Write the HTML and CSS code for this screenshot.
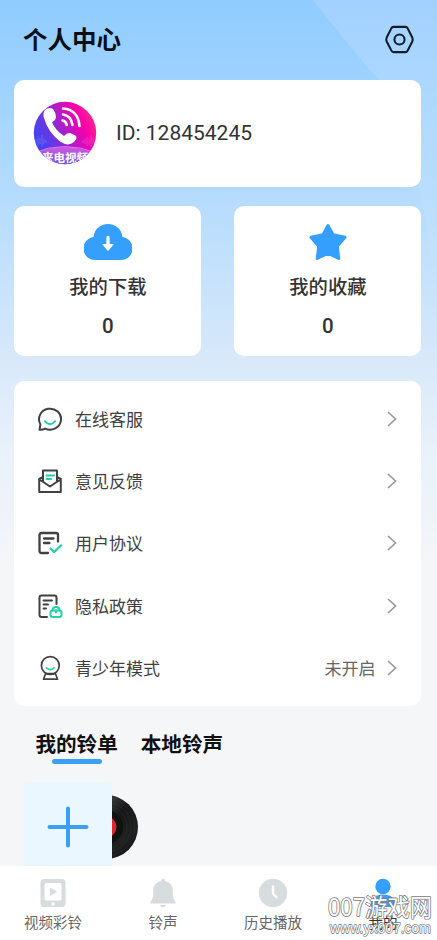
FILE: index.html
```html
<!DOCTYPE html>
<html lang="zh-CN">
<head>
<meta charset="utf-8">
<meta name="viewport" content="width=device-width, initial-scale=1">
<title>个人中心</title>
<link rel="stylesheet" href="styles.css">
</head>
<body>
<div class="app">
  <svg class="beam" viewBox="0 0 437 320" aria-hidden="true">
    <defs><linearGradient id="beam" x1="0" y1="0" x2="0" y2="1"><stop offset="0" stop-color="#b5d5ff" stop-opacity=".5"/><stop offset=".35" stop-color="#bfe0ff" stop-opacity=".4"/><stop offset="1" stop-color="#d5eaff" stop-opacity="0"/></linearGradient></defs>
    <path d="M313 0H437V320Q425 150 378 79Q340 35 313 0Z" fill="url(#beam)"/>
  </svg>
  <header class="header">
    <h1 class="title">个人中心</h1>
    <svg class="settings" viewBox="0 0 30 30" fill="none" stroke="#101c28" stroke-width="2">
      <path d="M9.200 2.800H20.800Q22.100 2.800 22.800 4L27.400 13.100Q28.100 15 27.400 16.900L22.800 25.800Q22.100 27.200 20.800 27.200H9.200Q7.900 27.200 7.200 25.800L2.600 16.900Q1.900 15 2.600 13.100L7.200 4Q7.900 2.800 9.200 2.800Z"/>
      <circle cx="15" cy="15" r="4.900"/>
    </svg>
  </header>

  <main class="content">
    <section class="card profile">
      <svg class="avatar" viewBox="0 0 64 64">
        <defs>
          <linearGradient id="av" x1="0" y1=".62" x2=".9" y2=".2"><stop offset="0" stop-color="#3c42f7"/><stop offset=".25" stop-color="#603be6"/><stop offset=".55" stop-color="#b51ac8"/><stop offset=".8" stop-color="#f500ae"/><stop offset="1" stop-color="#ff218f"/></linearGradient>
          <linearGradient id="hill" x1="0" y1="0" x2="0" y2="1"><stop offset="0" stop-color="#d755df"/><stop offset="1" stop-color="#6557ed"/></linearGradient>
          <clipPath id="round"><circle cx="32" cy="32" r="31.200"/></clipPath>
        </defs>
        <g clip-path="url(#round)">
          <path fill="url(#av)" d="M0 0H64V64H0Z"/>
          <path d="M0 53Q31 39 64 53V64H0Z" fill="url(#hill)"/>
          <path d="M0 52Q31 39 64 52" fill="none" stroke="#ef8cf0" stroke-width=".8"/>
          <path d="M3 38V42M5 35V45M7 37V43M9 34V46M11 38V43M13 39V42M50 39V42M52 38V43M54 36V45M56 38V44M58 34V46M60 37V43" stroke="#fff" stroke-opacity=".2"/>
          <path d="M12 9Q16 5.500 20 8Q22.500 11 23 16Q22.500 20 19 21Q22 29 31 35Q34 31.500 37 32L42.500 34.500Q45 37 41 41Q35 46 27 40.500Q15 31 11 17Q9.500 12 12 9Z" fill="#fff"/>
          <g fill="none" stroke="#fff" stroke-width="2.600" stroke-linecap="round"><path d="M30 13.500Q38 14.500 39.500 24M30 7.500Q45 8.500 46.500 25"/><path d="M29.500 19.500Q33 20 33.700 24"/></g>
          <text x="32" y="60.500" text-anchor="middle" class="avatar-text">来电视频</text>
        </g>
      </svg>
      <span class="user-id">ID: 128454245</span>
    </section>

    <section class="stats">
      <div class="card stat">
        <svg class="stat-icon" viewBox="0 0 48 38"><path d="M12.500 37A11.500 11.500 0 0 1 9.500 14C10.500 6 16.500 1 24 1S37.500 6 38.500 14A11.500 11.500 0 0 1 35.500 37Z" fill="#349ffc"/><path d="M22.400 13.500Q24 12 25.600 13.500V21H30L24.600 27.500Q24 28.100 23.400 27.500L18 21H22.400Z" fill="#fff"/></svg>
        <span class="stat-label">我的下载</span><span class="stat-value">0</span>
      </div>
      <div class="card stat">
        <svg class="stat-icon" viewBox="0 0 48 38"><path d="M24 2.500L29 11.800L41 14.300L33.300 23.300L34.800 35.500L24 30.500L13.200 35.500L14.700 23.300L7 14.300L19 11.800Z" fill="#349ffc" stroke="#349ffc" stroke-width="3" stroke-linejoin="round"/></svg>
        <span class="stat-label">我的收藏</span><span class="stat-value">0</span>
      </div>
    </section>

    <nav class="card menu">
      <a class="row"><svg class="row-icon" viewBox="0 0 26 26"><path d="M2.500 23.800L3.400 18.200A11 10.500 0 1 1 8.200 22.600Q6 24 2.500 23.800Z"/><path class="mint" d="M8 15.300Q13 21 18 15.300"/></svg><span class="row-label">在线客服</span><svg class="chevron" viewBox="0 0 12 18"><path d="M2 2L9.500 9L2 16"/></svg></a>
      <a class="row"><svg class="row-icon" viewBox="0 0 26 26"><path d="M6 9L2.200 11V24H23.800V11L20 9M2.500 11.500L13 18.500L23.500 11.500M6 13.500V2.500H20V13.500"/><path class="mint" d="M9.500 7.500H17M9.500 11H14"/></svg><span class="row-label">意见反馈</span><svg class="chevron" viewBox="0 0 12 18"><path d="M2 2L9.500 9L2 16"/></svg></a>
      <a class="row"><svg class="row-icon" viewBox="0 0 26 26"><path class="bold" d="M11 23H4.500Q2.500 23 2.500 21V5Q2.500 3 4.500 3H19Q21 3 21 5V11.500M7 8.500H16.500M7 13H12.500"/><path class="mint bold" d="M13.500 18.500L17.200 22L24 15.500"/></svg><span class="row-label">用户协议</span><svg class="chevron" viewBox="0 0 12 18"><path d="M2 2L9.500 9L2 16"/></svg></a>
      <a class="row"><svg class="row-icon" viewBox="0 0 26 26"><path d="M10 24H4.500Q2.500 24 2.500 22V4.500Q2.500 2.500 4.500 2.500H17.500Q19.500 2.500 19.500 4.500V11M6.500 7.500H15M6.500 11.500H11M6.500 15.500H9"/><g class="mint"><rect x="13.500" y="17.500" width="11" height="6.500" rx="2"/><path d="M15.500 17.500Q15.500 14 19 14T22.500 17.500M19 17.500V19.500"/></g></svg><span class="row-label">隐私政策</span><svg class="chevron" viewBox="0 0 12 18"><path d="M2 2L9.500 9L2 16"/></svg></a>
      <a class="row"><svg class="row-icon thin" viewBox="0 0 26 26"><circle cx="13.300" cy="10.500" r="8.900"/><path d="M8.500 18.700L6.500 24.200H20.500L18.500 18.700Z"/><path class="mint" d="M9.500 12.800Q13.300 16.500 17 12.800"/></svg><span class="row-label">青少年模式</span><span class="row-status">未开启</span><svg class="chevron" viewBox="0 0 12 18"><path d="M2 2L9.500 9L2 16"/></svg></a>
    </nav>

    <div class="tabs"><a class="tab active">我的铃单</a><a class="tab">本地铃声</a></div>

    <div class="playlist">
      <div class="add-tile"><svg class="plus" viewBox="0 0 42 42"><path d="M21 2.500V39.500M2.500 21H39.500" stroke="#3b9ff5" stroke-width="4" stroke-linecap="round"/></svg></div>
      <svg class="disc" viewBox="0 0 27 66">
        <defs><linearGradient id="vinyl" x1="0" y1="0" x2="1" y2="1"><stop offset="0" stop-color="#111"/><stop offset=".3" stop-color="#363a3a"/><stop offset=".5" stop-color="#161818"/><stop offset=".75" stop-color="#202222"/><stop offset="1" stop-color="#080808"/></linearGradient></defs>
        <circle cx="-6" cy="33" r="32" fill="url(#vinyl)"/>
        <g fill="none" stroke="#515454" stroke-width=".4" opacity=".4"><circle cx="-6" cy="33" r="29"/><circle cx="-6" cy="33" r="25"/><circle cx="-6" cy="33" r="21"/></g>
        <circle cx="-6" cy="33" r="17" fill="#101111"/><circle cx="-6" cy="33" r="10.500" fill="#d9272d"/>
      </svg>
    </div>
  </main>

  <footer class="tabbar">
    <a class="nav-item"><svg class="nav-icon" viewBox="0 0 30 30"><path fill-rule="evenodd" d="M6 1H24Q27.500 1 27.500 4.500V25.500Q27.500 29 24 29H6Q2.500 29 2.500 25.500V4.500Q2.500 1 6 1ZM8 5Q6.500 5 6.500 6.500V21Q6.500 22.500 8 22.500H22Q23.500 22.500 23.500 21V6.500Q23.500 5 22 5Z"/><path d="M12 9.500L19 13.700L12 18Z"/><circle cx="15" cy="26" r="1.700" fill="#fff"/></svg><span>视频彩铃</span></a>
    <a class="nav-item"><svg class="nav-icon" viewBox="0 0 30 30"><path d="M13 3Q13 .8 15 .8T17 3Q24.500 5 24.800 12V19L27.500 24Q28 25.500 27 25.500H3Q2 25.500 2.500 24L5.200 19V12Q5.500 5 13 3ZM12 27H18Q17.500 29.300 15 29.300T12 27Z"/></svg><span>铃声</span></a>
    <a class="nav-item"><svg class="nav-icon" viewBox="0 0 30 30"><circle cx="15" cy="15" r="14.200"/><path d="M15 8.500V15Q15 16.500 18.500 19" fill="none" stroke="#fff" stroke-width="2.400" stroke-linecap="round"/></svg><span>历史播放</span></a>
    <a class="nav-item current"><svg class="nav-icon" viewBox="0 0 30 30"><circle cx="15" cy="8.500" r="7.700"/><path d="M2.500 27.500Q3 16.500 15 16.500T27.500 27.500Q27.500 29 25.500 29H4.500Q2.500 29 2.500 27.500Z"/></svg><span>我的</span></a>
  </footer>

  <svg class="site-mark" viewBox="0 0 112 50">
    <text x="3" y="25" class="mark-name" textLength="104" lengthAdjust="spacingAndGlyphs">007游戏网</text>
    <text x="5" y="42" class="mark-url" textLength="101" lengthAdjust="spacingAndGlyphs">www.yx007.com</text>
  </svg>
</div>
</body>
</html>
```
FILE: styles.css
```css
* { box-sizing: border-box; }
body { margin: 0; font-family: Roboto, "Noto Sans CJK SC", sans-serif; color: #333; }
.app {
  position: relative; display: flex; flex-direction: column;
  width: 437px; height: 940px; overflow: hidden;
  background: linear-gradient(#90ccff 0, #9ed2ff 80px, #b6dcfd 200px, #d9e9fa 365px, #e9f1fa 450px, #f5f6f8 570px);
}
.beam { position: absolute; top: 0; left: 0; width: 437px; height: 320px; }
.header {
  position: relative; display: flex; align-items: center; justify-content: space-between;
  height: 80px; padding: 0 22px 2px 23px;
}
.title { margin: 4px 0 0; font-size: 24.500px; line-height: 36px; font-weight: 700; color: #080f18; }
.settings { width: 31px; height: 31px; }
.content { position: relative; flex: 1; min-height: 0; padding: 0 15.600px 0 14.400px; overflow: hidden; }
.card { background: #fff; border-radius: 10px; }
.profile { display: flex; align-items: center; gap: 18.600px; height: 106.500px; padding-left: 19px; }
.avatar { width: 64px; height: 64px; }
.avatar-text { font: 700 11.500px "Noto Sans CJK SC", sans-serif; fill: #fff; }
.user-id { font-size: 21px; line-height: 30px; }
.stats { display: grid; grid-template-columns: 1fr 1fr; gap: 33px; margin-top: 19.500px; }
.stat { display: flex; flex-direction: column; align-items: center; height: 150px; padding-top: 16.500px; }
.stat-icon { width: 48px; height: 38px; }
.stat-label { margin-top: 13px; font-size: 19.300px; line-height: 28px; font-weight: 500; }
.stat-value { margin-top: 9.500px; font-size: 20.500px; line-height: 30px; font-weight: 500; }
.menu { height: 325.500px; margin-top: 24.500px; padding: 7.500px 23px 0; }
.row { display: flex; align-items: center; height: 62.200px; }
.row-icon { width: 26px; height: 26px; margin-right: 11.500px; fill: none; stroke: #414141; stroke-width: 2; stroke-linejoin: round; stroke-linecap: round; }
.row-icon.thin { stroke-width: 1.700; }
.row-icon .bold { stroke-width: 2.300; }
.row-icon .mint { stroke: #23cfa5; }
.row-label { margin-top: 2px; font-size: 17px; line-height: 26px; color: #404040; }
.row-status { margin-left: auto; font-size: 17px; color: #666; }
.chevron { width: 12px; height: 18px; margin-left: auto; fill: none; stroke: #999; stroke-width: 1.700; }
.row-status + .chevron { margin-left: 11px; }
.tabs { display: flex; gap: 23px; padding: 24px 0 0 21px; }
.tab { display: flex; flex-direction: column; align-items: center; font-size: 20.600px; line-height: 30px; font-weight: 700; color: #111; }
.tab.active::after { content: ""; width: 50px; height: 5px; margin-top: -1px; border-radius: 3px; background: #3b9ff5; }
.playlist { display: flex; margin: 19px 0 0 9.500px; }
.add-tile { display: flex; justify-content: center; align-items: center; width: 88px; height: 88px; border-radius: 4px; background: #eaf7ff; }
.plus { width: 42px; height: 42px; }
.disc { width: 27px; height: 66px; margin-top: 11px; overflow: hidden; }
.tabbar { position: relative; display: grid; grid-template-columns: repeat(4, 110px); height: 74.500px; margin-left: -2px; width: 440px; background: #fff; }
.nav-item { display: flex; flex-direction: column; align-items: center; padding-top: 12px; font-size: 14.500px; line-height: 22px; color: #666; }
.nav-icon { width: 30px; height: 30px; margin-bottom: 5px; fill: #d7dcdf; }
.current .nav-icon { fill: #349ffc; }
.current { color: #333; }
.site-mark { position: absolute; left: 325px; top: 891px; width: 112px; height: 50px; }
.mark-name, .mark-url { fill: #fff; stroke: #777; paint-order: stroke; stroke-linejoin: round; }
.mark-name { font: 400 24px "Noto Sans CJK SC", sans-serif; stroke-width: 1.600px; }
.mark-url { font: 400 15px "Liberation Sans", sans-serif; stroke-width: 1.400px; }
```
